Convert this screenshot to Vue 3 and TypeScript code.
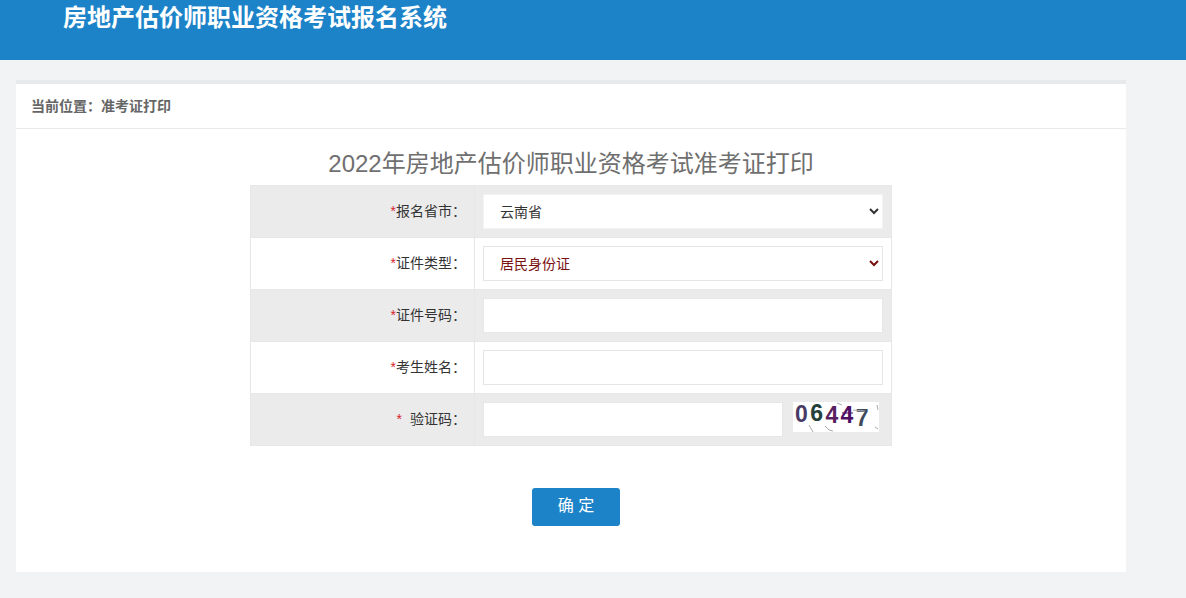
<script setup lang="ts">
interface Row {
  label: string
  kind: 'select' | 'input' | 'captcha'
  options?: string[]
  tone?: string
}
const rows: Row[] = [
  { label: '报名省市：', kind: 'select', options: ['云南省'] },
  { label: '证件类型：', kind: 'select', options: ['居民身份证'], tone: 'alert' },
  { label: '证件号码：', kind: 'input' },
  { label: '考生姓名：', kind: 'input' },
  { label: '验证码：', kind: 'captcha' },
]
const digits = [
  { c: '0', color: '#4a3a66', up: -2 },
  { c: '6', color: '#24403a', up: -3 },
  { c: '4', color: '#5a1f5e', up: -1 },
  { c: '4', color: '#4d0f63', up: -1 },
  { c: '7', color: '#3f4a5a', up: 2 },
]
</script>

<template>
  <div class="page">
    <header class="top"><h1>房地产估价师职业资格考试报名系统</h1></header>
    <main class="panel">
      <div class="crumb">当前位置：准考证打印</div>
      <h2>2022年房地产估价师职业资格考试准考证打印</h2>
      <div class="table">
        <div v-for="(r, i) in rows" :key="r.label" class="row" :class="{ odd: i % 2 === 0 }">
          <div class="lab">
            <span class="star" :class="{ wide: r.kind === 'captcha' }">*</span>{{ r.label }}
          </div>
          <div class="val">
            <select v-if="r.kind === 'select'" class="field sel" :class="r.tone">
              <option v-for="o in r.options" :key="o">{{ o }}</option>
            </select>
            <input v-else-if="r.kind === 'input'" class="field" type="text" />
            <template v-else>
              <input class="field short" type="text" />
              <div class="captcha">
                <span v-for="(d, k) in digits" :key="k" :style="{ color: d.color, transform: `translateY(${d.up}px)` }">{{ d.c }}</span>
                <svg class="noise" width="86" height="30" viewBox="0 0 86 30">
                  <path d="M16 23l4 7M32 24l4 4l4 1M44 1l5 2M60 8l12 1M84 3l1 5M82 25l3 2" fill="none" stroke="#a9adb0" stroke-width="1" />
                  <path d="M49 11h11" fill="none" stroke="#4d0f63" stroke-width="1" />
                </svg>
              </div>
            </template>
          </div>
        </div>
      </div>
      <div class="actions"><button type="button" class="ok">确 定</button></div>
    </main>
  </div>
</template>

<style>
html, body { margin: 0; background: #f2f3f5; }
</style>

<style scoped>
.page {
  min-height: 598px;
  background: #f2f3f5;
  font-family: "Liberation Sans", "Noto Sans CJK SC", sans-serif;
  overflow: hidden;
}
.top {
  height: 60px;
  background: #1c83c8;
  padding-left: 63px;
}
.top h1 {
  margin: 0;
  color: #fff;
  font-size: 24px;
  line-height: 36px;
  font-weight: 700;
}
.panel {
  margin: 20px 60px 0 16px;
  height: 488px;
  background: #fff;
  border-top: 4px solid #e8e9eb;
}
.crumb {
  height: 44px;
  line-height: 44px;
  padding-left: 15px;
  font-size: 14px;
  font-weight: 700;
  color: #666;
  border-bottom: 1px solid #e9e9e9;
}
h2 {
  margin: 0;
  padding-top: 19px;
  height: 37px;
  line-height: 32px;
  text-align: center;
  font-size: 24px;
  font-weight: 400;
  color: #6f6f6f;
  box-sizing: content-box;
}
.table {
  width: 642px;
  margin-left: 234px;
  border-bottom: 1px solid #e7e7e7;
  box-sizing: border-box;
}
.row {
  display: flex;
  height: 52px;
  box-sizing: border-box;
  border: 1px solid #e7e7e7;
  border-bottom: 0;
  background: #fff;
}
.row.odd { background: #ebebeb; }
.lab {
  width: 224px;
  box-sizing: border-box;
  padding-right: 8px;
  border-right: 1px solid #e7e7e7;
  text-align: right;
  font-size: 14px;
  line-height: 50px;
  color: #333;
}
.star { color: #d9232e; }
.star.wide { margin-right: 8px; }
.val {
  flex: 1;
  display: flex;
  align-items: flex-start;
  padding: 8px 0 0 8px;
}
.field {
  width: 400px;
  height: 35px;
  box-sizing: border-box;
  border: 1px solid #e5e5e5;
  background: #fff;
  font-family: inherit;
  font-size: 14px;
  color: #333;
  outline: none;
}
.sel { padding-left: 12px; border-radius: 0; }
.odd .field { border-color: #e7e7e7; }
.odd .sel { border-color: #f3f3f3; }
.sel.alert { color: #7a1010; }
.short { width: 300px; }
.captcha {
  position: relative;
  width: 86px;
  height: 30px;
  margin-left: 10px;
  background: #fff;
  display: flex;
  padding-left: 2px;
  box-sizing: border-box;
  font-family: "Liberation Sans", sans-serif;
  font-weight: 700;
  font-size: 23px;
  line-height: 28px;
  letter-spacing: 2.4px;
}
.noise { position: absolute; left: 0; top: 0; }
.actions { padding: 42px 0 0 10px; text-align: center; }
.ok {
  width: 88px;
  height: 38px;
  border: 0;
  border-radius: 3px;
  background: #1c83c8;
  color: #fff;
  font-family: inherit;
  font-size: 16px;
  line-height: 34px;
  padding: 0 0 2px;
}
</style>
